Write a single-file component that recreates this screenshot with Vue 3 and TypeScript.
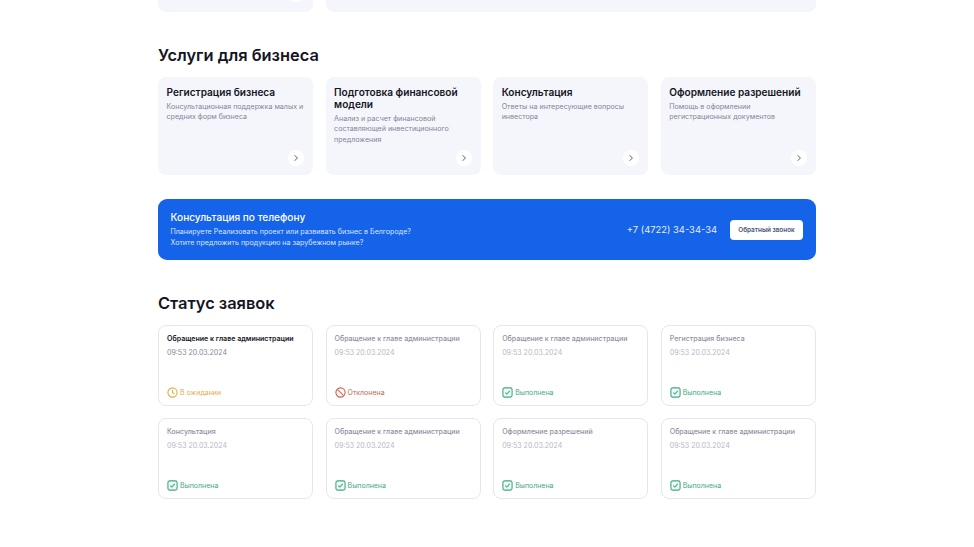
<template>
  <div class="page">
    <!-- Хвост предыдущего блока -->
    <div class="top-row">
      <div class="top-card top-card-small"><span class="top-circle"></span></div>
      <div class="top-card"></div>
    </div>

    <h2 class="section-title services-title">Услуги для бизнеса</h2>
    <div class="grid services">
      <div v-for="item in services" :key="item.title" class="service-card">
        <div class="service-title">{{ item.title }}</div>
        <div class="service-text">{{ item.text }}</div>
        <span class="arrow">
          <svg width="8" height="8" viewBox="0 0 8 8" fill="none">
            <path d="M2.6 1.2 L5.4 4 L2.6 6.8" stroke="#4a4e5e" stroke-width="0.9" />
          </svg>
        </span>
      </div>
    </div>

    <div class="banner">
      <div class="banner-left">
        <div class="banner-title">Консультация по телефону</div>
        <div class="banner-text">
          Планируете Реализовать проект или развивать бизнес в Белгороде?<br />
          Хотите предложить продукцию на зарубежном рынке?
        </div>
      </div>
      <div class="banner-phone">+7 (4722) 34-34-34</div>
      <button class="banner-button">Обратный звонок</button>
    </div>

    <h2 class="section-title status-title">Статус заявок</h2>
    <div class="grid statuses">
      <div v-for="(item, i) in requests" :key="i" class="status-card">
        <div class="status-name" :class="{ active: item.active }">{{ item.name }}</div>
        <div class="status-date" :class="{ active: item.active }">09:53 20.03.2024</div>
        <div class="status-state" :class="item.state">
          <svg v-if="item.state === 'wait'" width="11" height="11" viewBox="0 0 12 12" fill="none">
            <circle cx="6" cy="6" r="5" stroke="currentColor" stroke-width="1.2" />
            <path d="M6 3v3.2l2 1.2" stroke="currentColor" stroke-width="1.1" />
          </svg>
          <svg v-else-if="item.state === 'rejected'" width="11" height="11" viewBox="0 0 12 12" fill="none">
            <circle cx="6" cy="6" r="5" stroke="currentColor" stroke-width="1.2" />
            <path d="M2.6 2.6l6.8 6.8" stroke="currentColor" stroke-width="1.2" />
          </svg>
          <svg v-else width="11" height="11" viewBox="0 0 12 12" fill="none">
            <rect x="1" y="1" width="10" height="10" rx="2" fill="#eef8f4" stroke="currentColor" stroke-width="1.2" />
            <path d="M3.6 6.1l1.7 1.6 3.1-3.4" stroke="currentColor" stroke-width="1.1" />
          </svg>
          <span>{{ labels[item.state] }}</span>
        </div>
      </div>
    </div>
  </div>
</template>

<script setup lang="ts">
type State = 'wait' | 'rejected' | 'done'

interface Request {
  name: string
  state: State
  active?: boolean
}

const services = [
  { title: 'Регистрация бизнеса', text: 'Консультационная поддержка малых и средних форм бизнеса' },
  { title: 'Подготовка финансовой модели', text: 'Анализ и расчет финансовой составляющей инвестиционного предложения' },
  { title: 'Консультация', text: 'Ответы на интересующие вопросы инвестора' },
  { title: 'Оформление разрешений', text: 'Помощь в оформлении регистрационных документов' }
]

const labels: Record<State, string> = {
  wait: 'В ожидании',
  rejected: 'Отклонена',
  done: 'Выполнена'
}

const requests: Request[] = [
  { name: 'Обращение к главе администрации', state: 'wait', active: true },
  { name: 'Обращение к главе администрации', state: 'rejected' },
  { name: 'Обращение к главе администрации', state: 'done' },
  { name: 'Регистрация бизнеса', state: 'done' },
  { name: 'Консультация', state: 'done' },
  { name: 'Обращение к главе администрации', state: 'done' },
  { name: 'Оформление разрешений', state: 'done' },
  { name: 'Обращение к главе администрации', state: 'done' }
]
</script>

<style scoped>
.page {
  width: 658px;
  margin: 0 auto;
  font-family: Inter, "Liberation Sans", sans-serif;
  color: #14151f;
}

.top-row {
  display: flex;
  gap: 13px;
  height: 12px;
}

.top-card {
  flex: 1;
  display: flex;
  justify-content: flex-end;
  background: #f5f6fb;
  border-radius: 0 0 8px 8px;
  overflow: hidden;
}

.top-card-small {
  flex: 0 0 155px;
}

.top-circle {
  width: 16px;
  height: 16px;
  margin: -14px 9px 0 0;
  border-radius: 50%;
  background: #fff;
}

.section-title {
  margin: 0;
  font-size: 16.4px;
  line-height: 20px;
  font-weight: 600;
}

.services-title {
  margin-top: 33px;
}

.status-title {
  margin-top: 33px;
}

.grid {
  display: grid;
  grid-template-columns: repeat(4, 1fr);
  column-gap: 12.33px;
}

.services {
  margin-top: 12px;
}

.service-card {
  position: relative;
  height: 98px;
  box-sizing: border-box;
  padding: 9px 8px 0 8.5px;
  background: #f5f6fb;
  border-radius: 8px;
}

.service-title {
  font-size: 10.1px;
  line-height: 12px;
  font-weight: 600;
}

.service-text {
  margin-top: 4px;
  font-size: 7.1px;
  line-height: 10.3px;
  color: #82859a;
}

.arrow {
  position: absolute;
  right: 9px;
  bottom: 9px;
  width: 16px;
  height: 16px;
  display: flex;
  align-items: center;
  justify-content: center;
  border-radius: 50%;
  background: #fff;
}

.banner {
  display: flex;
  align-items: center;
  height: 61px;
  box-sizing: border-box;
  margin-top: 24px;
  padding: 0 13px 0 12.5px;
  background: #1563e8;
  border-radius: 9px;
  color: #fff;
}

.banner-left {
  flex: 1;
}

.banner-title {
  font-size: 10.1px;
  line-height: 13px;
  font-weight: 500;
}

.banner-text {
  margin-top: 3.5px;
  font-size: 7.1px;
  line-height: 10.3px;
  color: #dbe6fb;
}

.banner-phone {
  margin-right: 13px;
  font-size: 9.4px;
  color: #e6eefc;
}

.banner-button {
  width: 73px;
  height: 20px;
  padding: 0;
  border: none;
  border-radius: 4px;
  background: #fff;
  color: #46567a;
  font-family: inherit;
  font-size: 6.4px;
  font-weight: 600;
}

.statuses {
  margin-top: 12px;
  row-gap: 12px;
}

.status-card {
  display: flex;
  flex-direction: column;
  height: 81px;
  box-sizing: border-box;
  padding: 8px 8px 7px 8px;
  border: 1px solid #e6e7ee;
  border-radius: 8px;
  background: #fff;
}

.status-name {
  font-size: 7.05px;
  line-height: 10px;
  font-weight: 500;
  color: #8f919f;
}

.status-name.active {
  color: #14151f;
  font-weight: 600;
}

.status-date {
  margin-top: 4px;
  font-size: 7.05px;
  line-height: 10px;
  color: #b6b8c3;
}

.status-date.active {
  color: #85879a;
}

.status-state {
  display: flex;
  align-items: center;
  gap: 2px;
  margin-top: auto;
  font-size: 7px;
  line-height: 11px;
}

.wait {
  color: #dfae4c;
}

.rejected {
  color: #c9644f;
}

.done {
  color: #3fa887;
}
</style>

<style>
html,
body {
  margin: 0;
  background: #fff;
}
</style>
